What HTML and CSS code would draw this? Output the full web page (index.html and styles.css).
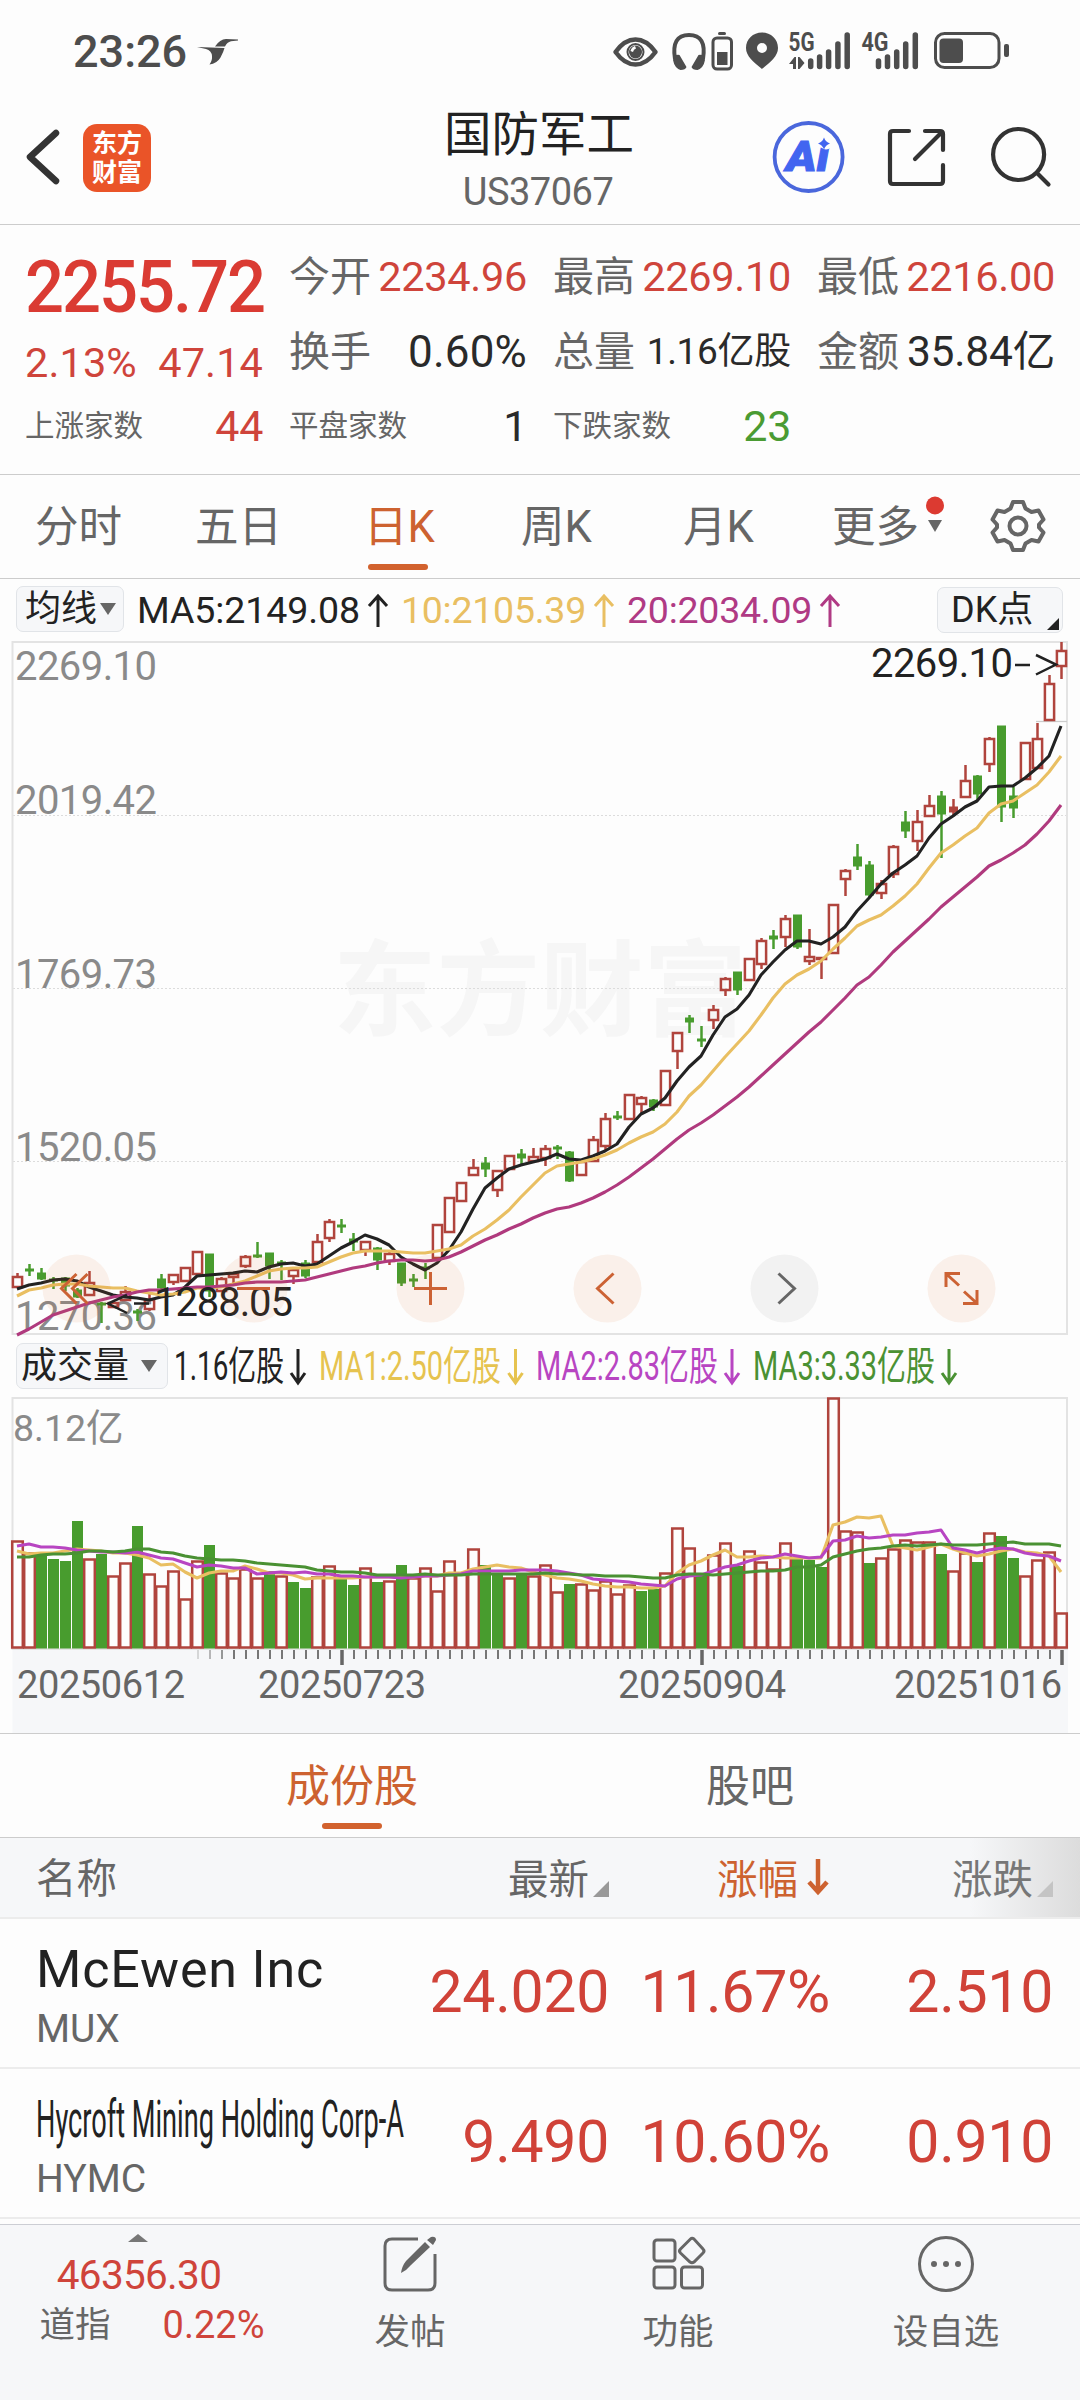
FILE: index.html
```html
<!DOCTYPE html>
<html lang="zh-CN">
<head>
<meta charset="utf-8">
<title>国防军工 US37067</title>
<link rel="stylesheet" href="styles.css">
</head>
<body>
<div class="screen">
  <div class="status">
    <span class="clock">23:26</span>
    <svg class="bird" width="42" height="27" viewBox="196 38 42 27"><path d="M215 46.500q5-7.500 11-7.500l12 .5v1l-7 .8q-4 1-6 5.200zM197 47l27.500 1q-1 4-4 9.500-3.500 6-11 7 3-4 2.500-8.500-.5-5.500-6-7z"/></svg>
    <svg class="sysicons" width="410" height="44" viewBox="604 29 410 44">
      <path class="s5" d="M615.500 52q9-12.500 20-12.500t20 12.500q-9 12.500-20 12.500t-20-12.500z"/>
      <circle class="s2" cx="635.500" cy="52" r="8"/><circle cx="635.500" cy="52" r="6.500"/><path class="w" d="M630.500 51q1-4 4.500-5l1 2.500q-2.500.5-3 3.500z"/>
      <path class="s4" d="M675 59q-4-24 14-24t14 24"/>
      <path d="M673 60q1-6 6.500-5l7 12q-1 3-6 3-6-2-7.500-10zM705 60q-1-6-6.500-5l-7 12q1 3 6 3 6-2 7.500-10z"/>
      <rect class="s3" x="713" y="38" width="18.500" height="31" rx="4"/><rect x="718" y="32" width="8" height="3" rx="1.500"/><rect x="717" y="52" width="10.500" height="13"/>
      <path fill-rule="evenodd" d="M762 32.500c9 0 16 6.500 16 15.500 0 8-7 13.500-16 21-9-7.500-16-13-16-21 0-9 7-15.500 16-15.500zm0 10.500a5 5 0 1 0 0 10 5 5 0 0 0 0-10z"/>
      <text class="net" x="788.500" y="51" textLength="26" lengthAdjust="spacingAndGlyphs">5G</text>
      <path d="M789 64l5.500-7h1.500v12h-3v-5zM798 57h1.500l5 6-5 6H798z"/>
      <text class="net" x="861.500" y="51" textLength="27" lengthAdjust="spacingAndGlyphs">4G</text>
      <path class="bars" d="M810.700 61v5.500M819.600 57v9.500M828.600 52v14.500M837.900 44v22.500M847.200 35v31.500M878.500 61v5.500M887.500 57v9.500M896.700 52v14.500M905.700 44v22.500M915.300 35v31.500"/>
      <rect class="s3" x="935.500" y="33.500" width="63.500" height="34" rx="9"/><rect x="939.500" y="38.500" width="23.500" height="24.500" rx="4"/><rect x="1004" y="44" width="5" height="13" rx="2"/>
    </svg>
  </div>

  <header class="head">
    <div class="head-left">
      <svg width="36" height="60" viewBox="25 127 36 60"><path class="back" d="M56 133L30 157l26 24"/></svg>
      <div class="logo"><span>东方</span><span>财富</span></div>
    </div>
    <div class="title"><h1>国防军工</h1><p>US37067</p></div>
    <svg class="head-icons" width="290" height="80" viewBox="770 117 290 80">
      <circle class="ai-ring" cx="808.600" cy="157" r="34"/>
      <text class="ai" x="786" y="171" textLength="43" lengthAdjust="spacingAndGlyphs">Ai</text>
      <circle class="w" cx="826" cy="143" r="6.500"/>
      <path class="ai-star" d="M824 137.500q1.500 4.500 6 6-4.500 1.500-6 6-1.500-4.500-6-6 4.500-1.500 6-6z"/>
      <path class="hi" d="M909 131h-16q-3 0-3 3v47q0 3 3 3h47q3 0 3-3v-16M925 131h15q3 0 3 3v16M942 132l-27 27"/>
      <circle class="hi" cx="1018.600" cy="154.500" r="25.500"/><path class="hi" d="M1037 173l11.500 11.500"/>
    </svg>
  </header>

  <section class="quote">
    <div class="qcol main">
      <div class="last">2255.72</div>
      <div class="cell chg red"><span>2.13%</span><span>47.14</span></div>
      <div class="cell small"><label>上涨家数</label><b class="red">44</b></div>
    </div>
    <div class="qcol">
      <div class="cell"><label>今开</label><b class="red">2234.96</b></div>
      <div class="cell"><label>换手</label><b class="turn">0.60%</b></div>
      <div class="cell small"><label>平盘家数</label><b>1</b></div>
    </div>
    <div class="qcol">
      <div class="cell"><label>最高</label><b class="red">2269.10</b></div>
      <div class="cell"><label>总量</label><b class="vol">1.16亿股</b></div>
      <div class="cell small"><label>下跌家数</label><b class="green">23</b></div>
    </div>
    <div class="qcol">
      <div class="cell"><label>最低</label><b class="red">2216.00</b></div>
      <div class="cell"><label>金额</label><b class="amt">35.84亿</b></div>
    </div>
  </section>

  <nav class="ktabs">
    <span>分时</span><span>五日</span><span class="on">日K</span><span>周K</span><span>月K</span>
    <span class="more">更多<svg width="22" height="40" viewBox="926 495 22 40"><circle class="dot" cx="937" cy="505.500" r="9"/><path d="M930 520h14l-7 12z"/></svg></span>
    <svg class="gear" width="56" height="56" viewBox="-28 -28 56 56"><path d="M-5 -24h10l2.500 6.500 6 3.500 7-1.500 5 9-4.500 5v3l4.500 5-5 9-7-1.500-6 3.500L5 24H-5l-2.500-6.500-6-3.500-7 1.500-5-9 4.500-5v-3l-4.500-5 5-9 7 1.500 6-3.500z"/><circle r="8.500"/></svg>
  </nav>

  <div class="marow">
    <button class="chip">均线<i class="down"></i></button>
    <div class="mas">
      <span>MA5:2149.08<svg class="arr" viewBox="0 0 22 34"><path d="M11 33V2M2 12l9-10 9 10"/></svg></span>
      <span class="yel">10:2105.39<svg class="arr" viewBox="0 0 22 34"><path d="M11 33V2M2 12l9-10 9 10"/></svg></span>
      <span class="pur">20:2034.09<svg class="arr" viewBox="0 0 22 34"><path d="M11 33V2M2 12l9-10 9 10"/></svg></span>
    </div>
    <button class="chip dk">DK点<i class="corner"></i></button>
  </div>

  <svg class="chart" width="1080" height="704" viewBox="0 636 1080 704">
    <text class="mark" x="333" y="1028" textLength="414" lengthAdjust="spacingAndGlyphs">东方财富</text>
    <path class="grid" d="M13 815.500H1067M13 988.500H1067M13 1161.500H1067"/>
    <path class="frame" d="M12.500 642H1067V1334H12.500z"/>
    <g class="axis">
      <text x="15" y="680" textLength="142">2269.10</text><text x="15" y="814" textLength="142">2019.42</text>
      <text x="15" y="988" textLength="142">1769.73</text><text x="15" y="1161" textLength="142">1520.05</text>
      <text x="15" y="1330" textLength="142">1270.36</text>
    </g>
    <path class="gridsolid" d="M1036 721.500H1067"/>
    <g id="candles"></g>
    <g class="note">
      <text x="871" y="677" textLength="142">2269.10</text><path d="M1015 665h15M1036 655l20 9.500-20 10"/>
      <text x="154" y="1316" textLength="139">1288.05</text><path d="M127 1295l-19 8.500 19 9.500M134 1303.500h15"/>
    </g>
    <g class="tools">
      <circle cx="76.500" cy="1288.500" r="34"/><circle cx="253.500" cy="1288.500" r="34"/><circle cx="430.500" cy="1288.500" r="34"/>
      <circle cx="607.500" cy="1288.500" r="34"/><circle class="off" cx="784.500" cy="1288.500" r="34"/><circle cx="961.500" cy="1288.500" r="34"/>
      <path d="M76.500 1274l-15 14.500 15 15M87.500 1274l-15 14.500 15 15M237 1288.500h33M414 1288.500h33M430.500 1272v33M613.500 1273.500l-16 15 16 15"/>
      <path class="off" d="M778.500 1273.500l16 15-16 15"/>
      <path d="M960 1273.500h-14V1287M947 1274.500l12 11M963 1303.500h14V1290M964 1291.500l12 11"/>
    </g>
  </svg>

  <div class="volrow">
    <button class="chip">成交量<i class="down"></i></button>
    <svg width="900" height="52" viewBox="170 1340 900 52">
      <g class="k"><text x="174" y="1380" textLength="110" lengthAdjust="spacingAndGlyphs">1.16亿股</text><path d="M298 1349v34M291 1373l7 10 7-10"/></g>
      <g class="y"><text x="319" y="1380" textLength="182" lengthAdjust="spacingAndGlyphs">MA1:2.50亿股</text><path d="M515.500 1349v34M508.500 1373l7 10 7-10"/></g>
      <g class="p"><text x="536" y="1380" textLength="182" lengthAdjust="spacingAndGlyphs">MA2:2.83亿股</text><path d="M732 1349v34M725 1373l7 10 7-10"/></g>
      <g class="g"><text x="753" y="1380" textLength="182" lengthAdjust="spacingAndGlyphs">MA3:3.33亿股</text><path d="M949 1349v34M942 1373l7 10 7-10"/></g>
    </svg>
  </div>

  <svg class="chart" width="1080" height="341" viewBox="0 1392 1080 341">
    <path class="datebg" d="M12.500 1649H1068v84H12.500z"/>
    <path class="frame" d="M12.500 1398H1067V1649H12.500z"/>
    <text class="axis vmax" x="13" y="1441">8.12亿</text>
    <g id="volume"></g>
    <g class="dates">
      <text x="17" y="1697.500" textLength="168">20250612</text><text x="258" y="1697.500" textLength="168">20250723</text>
      <text x="618" y="1697.500" textLength="168">20250904</text><text x="894" y="1697.500" textLength="168">20251016</text>
    </g>
  </svg>

  <nav class="ltabs"><span class="on">成份股</span><span>股吧</span></nav>

  <section class="table">
    <div class="row thead">
      <span class="first">名称</span>
      <span class="num">最新<i class="corner"></i></span>
      <span class="num sort">涨幅<svg width="24" height="36" viewBox="0 0 24 36"><path d="M12 0v32M3 23l9 10 9-10"/></svg></span>
      <span class="num">涨跌<i class="corner"></i></span>
    </div>
    <div class="row">
      <div class="name"><strong>McEwen Inc</strong><em>MUX</em></div>
      <span class="num">24.020</span><span class="num">11.67%</span><span class="num">2.510</span>
    </div>
    <div class="row">
      <div class="name"><svg width="370" height="60" viewBox="0 0 370 60"><text x="0" y="47" textLength="368" lengthAdjust="spacingAndGlyphs">Hycroft Mining Holding Corp-A</text></svg><em>HYMC</em></div>
      <span class="num">9.490</span><span class="num">10.60%</span><span class="num">0.910</span>
    </div>
  </section>

  <footer class="bar">
    <div class="index"><i class="up"></i><b>46356.30</b><div><label>道指</label><span>0.22%</span></div></div>
    <div class="act"><svg width="58" height="58" viewBox="381 2235 58 58"><path d="M418 2239h-26q-7 0-7 7v37q0 7 7 7h36q7 0 7-7v-29"/><path class="f" d="M401 2273q1-7 5-12l19-19 5 5-19 18q-4 5-10 8zM427 2240l4-3q5-1 5 3l-3 5z"/></svg><span>发帖</span></div>
    <div class="act"><svg width="58" height="58" viewBox="649 2235 58 58"><rect x="654" y="2240" width="21" height="21" rx="3"/><rect x="654" y="2267" width="21" height="21" rx="3"/><rect x="681.500" y="2267" width="21" height="21" rx="3"/><path d="M690.500 2239l-10 10q-2 2 0 4l9.500 9q2 1.500 4 0l9-9q2-2 0-4l-9-10q-2-1.500-3.500 0z"/></svg><span>功能</span></div>
    <div class="act"><svg width="58" height="58" viewBox="917 2235 58 58"><circle cx="946" cy="2264" r="26.500"/><circle class="f" cx="934" cy="2264" r="3"/><circle class="f" cx="946" cy="2264" r="3"/><circle class="f" cx="958" cy="2264" r="3"/></svg><span>设自选</span></div>
  </footer>
</div>
<script src="chart.js"></script>
</body>
</html>
```
FILE: styles.css
```css
* { box-sizing: border-box; margin: 0; padding: 0; }
body { width: 1080px; background: #fdfdfd; font-family: Roboto, "Noto Sans CJK SC", sans-serif; color: #222; }
svg { display: block; flex: none; overflow: visible; }
b, em, strong, i, h1 { font-weight: 400; font-style: normal; }
button { font: inherit; color: inherit; }
.screen { width: 1080px; height: 2400px; display: flex; flex-direction: column; overflow: hidden; background: #fdfdfd; }
.red { color: #cf443b !important; }
.green { color: #4a9b33 !important; }

.status { height: 96px; padding: 29px 66px 0 73px; display: flex; color: #4d4d4d; fill: #4d4d4d; }
.clock { width: 123px; font-size: 45px; line-height: 46px; font-weight: 500; }
.bird { margin-top: 9px; }
.sysicons { margin-left: auto; }
.sysicons .s2, .sysicons .s3, .sysicons .s4, .sysicons .s5 { fill: none; stroke: #4d4d4d; stroke-width: 2; }
.sysicons .s3 { stroke-width: 3; }
.sysicons .s4 { stroke-width: 4; }
.sysicons .s5 { stroke-width: 4.5; stroke-linejoin: round; }
.w { fill: #fdfdfd; }
.net { font-size: 26px; font-weight: 700; }
.bars { fill: none; stroke: #4d4d4d; stroke-width: 5.5; stroke-linecap: round; }

.head { height: 129px; border-bottom: 1px solid #ccc; display: grid; grid-template-columns: 391px 298px 391px; }
.head-left { display: flex; padding: 28px 0 0 25px; }
.head-left svg { margin-top: 3px; }
.back { fill: none; stroke: #333; stroke-width: 6.5; stroke-linecap: round; stroke-linejoin: round; }
.logo { width: 68px; height: 68px; margin-left: 22px; border-radius: 14px; background: #ea5428; color: #fff; display: flex; flex-direction: column; align-items: center; justify-content: center; }
.logo span { font-size: 25px; line-height: 29px; font-weight: 700; }
.title { text-align: center; padding-top: 12px; }
.title h1 { font-size: 47.500px; line-height: 54px; }
.title p { font-size: 38px; line-height: 44px; margin-top: 8px; letter-spacing: -.5px; color: #666; padding-right: 4px; }
.title h1 { padding-right: 2px; }
.head-icons { margin: 21px 0 0 81px; }
.hi { fill: none; stroke: #333; stroke-width: 4.2; stroke-linecap: round; stroke-linejoin: round; }
.ai-ring { fill: none; stroke: #4a67dc; stroke-width: 3.8; }
.ai { font: italic 900 42px Roboto, sans-serif; fill: #4265f0; stroke: #4265f0; stroke-width: 1px; }
.ai-star { fill: #4265f0; }

.quote { height: 250px; border-bottom: 1px solid #ccc; display: grid; grid-template-columns: repeat(4, 238px); column-gap: 26px; padding: 14px 0 0 25px; align-items: start; }
.last { font-size: 72px; line-height: 98px; font-weight: 500; color: #da3b33; letter-spacing: -2.200px; transform: scaleX(.955); transform-origin: 2px 50%; }
.cell { height: 75px; display: flex; justify-content: space-between; align-items: center; line-height: 48px; white-space: nowrap; color: #2a2a2a; }
.cell label { font-size: 41px; color: #666; }
.cell b, .cell span { font-size: 41.500px; letter-spacing: -.3px; }
.cell.chg { height: 52px; }
.cell.chg span { letter-spacing: .1px; }
.cell.small label { font-size: 29.500px; }
.cell.small { height: 74px; }
.cell.small b { font-size: 43px; }
.cell .vol { font-size: 37px; }
.cell .turn { font-size: 44px; letter-spacing: .2px; }
.cell .amt { font-size: 42.500px; letter-spacing: -.2px; }

.ktabs { height: 104px; border-bottom: 1px solid #ccc; display: grid; grid-template-columns: 160px 169px 157px 162px 149px 158px 56px; padding-left: 35px; line-height: 105px; font-size: 43.500px; color: #666; }
.ktabs .on { color: #cd6230; }
.on { position: relative; }
.on::after { content: ""; position: absolute; left: 4px; top: 89px; width: 60px; height: 6px; border-radius: 3px; background: #d2622e; }
.ktabs .more { display: flex; }
.more svg { margin: 20px 0 0 5px; fill: #666; }
.more .dot { fill: #dc3a31; }
.gear { margin-top: 23px; fill: none; stroke: #666; stroke-width: 4; stroke-linejoin: round; }

.marow { height: 57px; padding: 7px 17px 0 16px; display: flex; }
.chip { position: relative; height: 46px; border: 1.500px solid #e1e4e8; border-radius: 7px; background: #f6f7f9; font-size: 36px; line-height: 44px; display: flex; align-items: center; padding-left: 8px; white-space: nowrap; }
.marow .chip { width: 108px; }
.marow .dk { width: 126px; margin-left: auto; padding-left: 13px; margin-top: 1px; }
.down { border: 8px solid transparent; border-top: 12px solid #666; border-bottom: 0; margin-left: 3px; }
.dk .corner { position: absolute; right: 3px; bottom: 2px; border: 6px solid #222; border-top-color: transparent; border-left-color: transparent; }
.mas { display: flex; font-size: 37.500px; letter-spacing: -.1px; line-height: 48px; margin-left: 13px; gap: 12px; }
.mas .yel, .mas .pur { letter-spacing: -.25px; }
.mas span { display: flex; }
.arr { width: 22px; height: 34px; margin: 8px 0 0 7px; fill: none; stroke: currentColor; stroke-width: 3; }
.yel { color: #e9bf62; }
.pur { color: #b03a84; }

.chart .mark { font-size: 104px; font-weight: 700; fill: #f6f6f6; }
.grid { fill: none; stroke: #dcdcdc; stroke-width: 1; stroke-dasharray: 2 2; }
.gridsolid { stroke: #ccc; stroke-width: 1.300; }
.frame { fill: none; stroke: #e3e3e3; stroke-width: 2; }
.axis { font-size: 40px; fill: #8a8a8a; }
.axis.vmax { font-size: 37.500px; }
.note { font-size: 40px; fill: #222; }
.note path, .tools path { fill: none; stroke: #222; stroke-width: 2.500; }
.tools circle { fill: rgba(215, 100, 40, .085); }
.tools circle.off { fill: #f2f2f2; }
.tools path { stroke: #cc6234; stroke-width: 3; }
.tools path.off { stroke: #666; }
.up-line { stroke: #b0443d; stroke-width: 2.500; fill: none; }
.down-line { stroke: #489c2e; stroke-width: 2.500; fill: none; }
.down-body { fill: #489c2e; }
.up-solid { fill: #b0443d; }
.ma { fill: none; stroke-width: 3.100; stroke-linejoin: round; }
.ma5 { stroke: #222; }
.ma10 { stroke: #e9bf62; }
.ma20 { stroke: #b03a7e; }
.v2 { stroke: #b845c2; }
.v3 { stroke: #4a9133; }

.volrow { height: 52px; display: flex; padding: 3px 0 0 16px; }
.volrow .chip { width: 152px; padding-left: 4px; }
.volrow .down { margin-left: 12px; }
.volrow svg { margin: -3px 0 0 2px; font-size: 40px; }
.volrow path { fill: none; stroke-width: 3; }
.k { fill: #222; stroke: #222; } .y { fill: #e6c34f; stroke: #e6c34f; } .p { fill: #b845c2; stroke: #b845c2; } .g { fill: #4a9133; stroke: #4a9133; }
.volrow text { stroke: none; }
.datebg { fill: #f6f7f9; }
.dates { font-size: 38px; fill: #666; }
.tick { stroke: #777; stroke-width: 2; }
.tick-big { stroke: #666; stroke-width: 3.500; }

.ltabs { height: 105px; border-top: 1px solid #ccc; border-bottom: 1px solid #ccc; display: grid; grid-template-columns: 420px 400px; padding-left: 286px; line-height: 106px; font-size: 44px; color: #666; }
.ltabs .on { color: #cd6230; }
.ltabs .on::after { left: 36px; }

.row { height: 150px; border-bottom: 2px solid #ececec; padding-left: 36px; display: grid; grid-template-columns: 380px 193px 221px 223px; align-items: center; }
.row .num { text-align: right; font-size: 59px; color: #d04238; letter-spacing: -.3px; padding-bottom: 3px; }
.thead { height: 81px; font-size: 40.500px; color: #666; background: linear-gradient(90deg, rgba(220,220,220,0) 970px, #dcdcdc 1080px), #f6f7f9; }
.thead .first { padding-bottom: 5px; }
.row.thead .num { font-size: 40.500px; color: #666; display: flex; justify-content: flex-end; letter-spacing: 0; padding-bottom: 2px; }
.thead .corner { border: 8px solid #999; border-top-color: transparent; border-left-color: transparent; align-self: flex-end; margin: 0 0 9px 4px; }
.row.thead .sort { color: #cd6230; }
.sort svg { fill: none; stroke: #cd6230; stroke-width: 4.500; margin: 12px 0 0 8px; }
.row.thead .num:last-child { color: #777; }
.thead .num:last-child .corner { border-right-color: #c4c4c4; border-bottom-color: #c4c4c4; }
.name strong, .name em { display: block; }
.name strong { font-size: 52px; line-height: 60px; letter-spacing: .8px; }
.name svg { font-size: 52px; fill: #222; }
.name em { font-size: 39px; line-height: 46px; color: #666; margin-top: 6px; }
.name { padding-top: 6px; }

.bar { margin-top: 5px; flex: 1; border-top: 1px solid #ccced4; background: #f6f7f9; display: grid; grid-template-columns: 276px repeat(3, 268px); }
.act { display: flex; flex-direction: column; align-items: center; padding-top: 10px; font-size: 35.500px; line-height: 48px; color: #666; }
.act svg { fill: none; stroke: #666; stroke-width: 3; }
.act .f { fill: #666; stroke: none; }
.act span { margin-top: 15px; }
.index { display: flex; flex-direction: column; align-items: center; padding-top: 9px; color: #cf443b; }
.up { border: 10.500px solid transparent; border-bottom: 8px solid #777; border-top: 0; }
.index b { font-size: 40.500px; line-height: 48px; letter-spacing: -.7px; margin: 9px 0 0 2px; }
.index div { display: flex; width: 225px; justify-content: space-between; font-size: 38px; line-height: 48px; margin: 2px 0 0 28px; }
.index label { font-size: 35.500px; color: #666; }
```
FILE: chart.js
```js
const X0 = 17, STEP = 12;
const x = i => X0 + i * STEP;

// direction, high, body top, body bottom, low
const candles = `r1273,1277,1287,1287 g1264,1269,1271,1276 g1268,1273,1279,1280 g1277,1279,1281,1289 g1277,1278,1286,1291
g1288,1290,1297,1298 r1271,1283,1295,1296 g1302,1303,1305,1323 r1302,1303,1307,1308 r1286,1292,1300,1301
g1309,1311,1313,1321 r1294,1300,1309,1311 g1274,1279,1288,1289 r1274,1275,1282,1285 r1267,1268,1281,1281
r1251,1252,1274,1275 g1254,1254,1291,1297 r1277,1279,1291,1292 r1272,1274,1277,1284 r1255,1257,1266,1268
g1242,1255,1257,1258 g1253,1253,1266,1279 g1260,1262,1264,1280 r1269,1270,1276,1284 g1260,1263,1276,1278
r1234,1242,1262,1262 r1219,1222,1238,1242 g1219,1225,1227,1233 g1233,1239,1242,1251 r1241,1242,1250,1256
g1247,1248,1260,1270 r1252,1254,1261,1265 g1263,1263,1283,1286 g1274,1279,1281,1287 g1263,1267,1269,1279
r1225,1225,1258,1258 r1197,1198,1232,1232 r1183,1183,1201,1201 r1159,1168,1175,1175 g1157,1163,1169,1177
r1170,1171,1190,1197 r1156,1156,1169,1170 g1149,1154,1158,1165 r1148,1157,1161,1163 r1145,1149,1158,1166
g1145,1147,1149,1159 g1151,1152,1181,1182 r1162,1162,1175,1176 r1136,1140,1161,1161 r1113,1119,1146,1150
g1111,1116,1118,1120 r1094,1095,1119,1120 r1096,1098,1104,1113 g1099,1100,1107,1111 r1070,1071,1105,1105
r1032,1033,1051,1069 g1015,1018,1022,1033 g1026,1039,1041,1047 r1005,1010,1020,1029 r977,979,990,996
g972,972,990,995 r958,959,980,981 r938,941,964,969 g930,936,939,949 r915,919,937,947
g915,915,947,949 r929,957,961,965 r957,958,959,979 r904,905,953,953 r869,871,879,896
g844,857,866,870 g861,865,895,897 r880,884,893,899 r845,847,874,878 g811,822,831,838
r810,822,841,851 r795,806,816,817 g791,796,814,858 s799,807,812,815 r765,781,797,798
g775,776,794,800 r737,739,764,772 g726,726,807,822 g787,796,808,818 r742,743,779,779
r723,739,768,769 r675,684,720,721 r642,651,666,679`.split(/\s+/);

const ma5 = [1289,1285,1283,1280,1279,1281,1287,1291,1295,1297,1298,1300,1297,1295,1287,1276,1275,1274,1273,1271,1272,1267,1264,1263,1266,1264,1256,1248,1242,1235,1239,1245,1257,1264,1270,1263,1250,1232,1209,1188,1178,1169,1165,1162,1159,1154,1159,1160,1156,1151,1144,1127,1114,1108,1098,1081,1067,1056,1035,1017,1009,995,975,962,950,941,941,944,937,927,911,898,884,873,865,856,838,824,816,807,801,787,786,786,778,768,756,726];
const ma10 = [1296,1290,1288,1285,1284,1284,1286,1287,1288,1288,1291,1293,1295,1294,1292,1288,1288,1287,1284,1281,1276,1271,1269,1268,1268,1267,1262,1257,1253,1251,1251,1251,1252,1253,1253,1251,1249,1245,1236,1229,1220,1210,1197,1185,1173,1166,1164,1162,1159,1155,1150,1143,1137,1132,1124,1112,1096,1085,1071,1057,1044,1031,1015,998,984,975,969,961,949,938,926,920,915,906,896,884,868,853,845,836,828,813,804,801,793,785,772,756];
const ma20 = [1335,1329,1322,1315,1311,1307,1303,1300,1297,1295,1292,1290,1290,1289,1288,1287,1287,1286,1285,1283,1282,1282,1282,1281,1280,1277,1274,1271,1268,1266,1263,1261,1260,1260,1261,1260,1257,1252,1246,1240,1235,1229,1224,1218,1213,1209,1207,1203,1198,1192,1185,1177,1168,1159,1149,1139,1130,1123,1115,1106,1097,1087,1076,1065,1054,1043,1032,1022,1010,998,985,977,965,952,941,930,919,907,897,887,877,866,860,853,845,834,821,805];

const volume = `r1541 r1553 g1555 g1559 g1561 g1521 r1559 g1554 r1576 r1563 g1526 r1574 r1586 r1571 r1599 r1561 g1545 r1573 r1578 r1569 r1578 g1571 r1576 g1582 g1588 r1577 r1566 g1579 g1585 r1568 g1582 r1581 g1565 r1578 r1568 r1591 r1561 r1573 r1549 g1565 g1573 r1578 g1573 r1576 r1565 r1592 g1584 r1584 r1590 r1581 r1594 r1585 g1591 g1589 r1573 r1528 r1548 g1574 r1555 r1543 g1566 r1551 r1562 r1569 r1543 g1559 g1560 g1567 r1398 r1531 r1532 g1563 r1558 r1549 r1540 r1542 r1542 g1554 r1571 r1553 g1562 r1533 g1536 g1558 r1576 r1560 r1552 r1613`.split(' ');
const v1 = [1551,1554,1553,1553,1551,1549,1550,1551,1553,1553,1555,1558,1565,1564,1572,1578,1573,1571,1571,1566,1569,1573,1573,1575,1579,1578,1578,1578,1578,1577,1577,1577,1577,1577,1576,1576,1573,1573,1569,1567,1565,1567,1568,1572,1575,1578,1579,1581,1584,1586,1587,1587,1588,1588,1586,1573,1565,1561,1555,1550,1557,1557,1556,1557,1558,1558,1558,1558,1525,1522,1517,1518,1516,1546,1548,1550,1547,1544,1549,1553,1556,1554,1551,1549,1552,1553,1556,1572];
const v2 = [1546,1544,1547,1547,1548,1550,1551,1552,1552,1553,1552,1555,1558,1559,1563,1567,1565,1566,1568,1568,1574,1573,1572,1573,1572,1574,1574,1576,1576,1577,1577,1577,1578,1577,1576,1576,1575,1574,1571,1571,1571,1571,1570,1570,1570,1571,1573,1575,1579,1580,1581,1582,1584,1585,1586,1579,1576,1575,1571,1567,1565,1561,1558,1557,1554,1556,1558,1557,1541,1540,1536,1538,1537,1535,1535,1533,1532,1530,1548,1550,1553,1550,1548,1549,1553,1555,1556,1561];
const v3 = [1557,1557,1555,1554,1554,1553,1551,1551,1552,1551,1549,1549,1552,1553,1556,1558,1559,1560,1560,1561,1563,1564,1565,1566,1567,1570,1571,1572,1572,1573,1575,1575,1575,1575,1574,1575,1575,1575,1574,1574,1574,1574,1574,1574,1573,1574,1574,1575,1575,1576,1576,1576,1577,1578,1578,1575,1574,1574,1575,1574,1573,1572,1571,1571,1570,1567,1567,1565,1557,1554,1551,1549,1548,1546,1545,1546,1545,1544,1545,1545,1545,1544,1543,1542,1544,1544,1544,1546];

const line = (ys, cls) => `<polyline class="ma ${cls}" points="${ys.map((y, i) => x(i) + ',' + y).join(' ')}"/>`;

let out = '';
candles.forEach((c, i) => {
  const [hi, top, bot, lo] = c.slice(1).split(',').map(Number);
  const cx = x(i) + .5;
  if (c[0] === 'r') {
    out += `<path class="up-line" d="M${cx} ${hi}V${top}M${cx} ${bot}V${lo}M${cx - 4.6} ${top}h9.200v${bot - top}h-9.200z"/>`;
  } else {
    const g = c[0] === 'g';
    out += `<path class="${g ? 'down-line' : 'up-line'}" d="M${cx} ${hi}V${lo}"/><rect class="${g ? 'down-body' : 'up-solid'}" x="${cx - 4.5}" y="${top - .5}" width="9" height="${bot - top + 1}"/>`;
  }
});
out += line(ma5, 'ma5') + line(ma10, 'ma10') + line(ma20, 'ma20');
document.getElementById('candles').innerHTML = out;

out = '';
volume.forEach((v, i) => {
  const top = +v.slice(1), cx = x(i) + .5;
  out += v[0] === 'g'
    ? `<rect class="down-body" x="${cx - 5.5}" y="${top}" width="11" height="${1648.5 - top}"/>`
    : `<path class="up-line" d="M${cx - 5.3} ${top + .5}h10.600V1647.500h-10.600z"/>`;
});
out += line(v1, 'ma10') + line(v2, 'v2') + line(v3, 'v3');
for (let i = 15; i < 88; i++) {
  const big = i % 30 === 27;
  out += `<path class="${big ? 'tick-big' : 'tick'}" d="M${x(i) + 1} 1650v${big ? 15 : 9}" opacity="${Math.min(1, (i - 14) / 4)}"/>`;
}
document.getElementById('volume').innerHTML = out;
```
